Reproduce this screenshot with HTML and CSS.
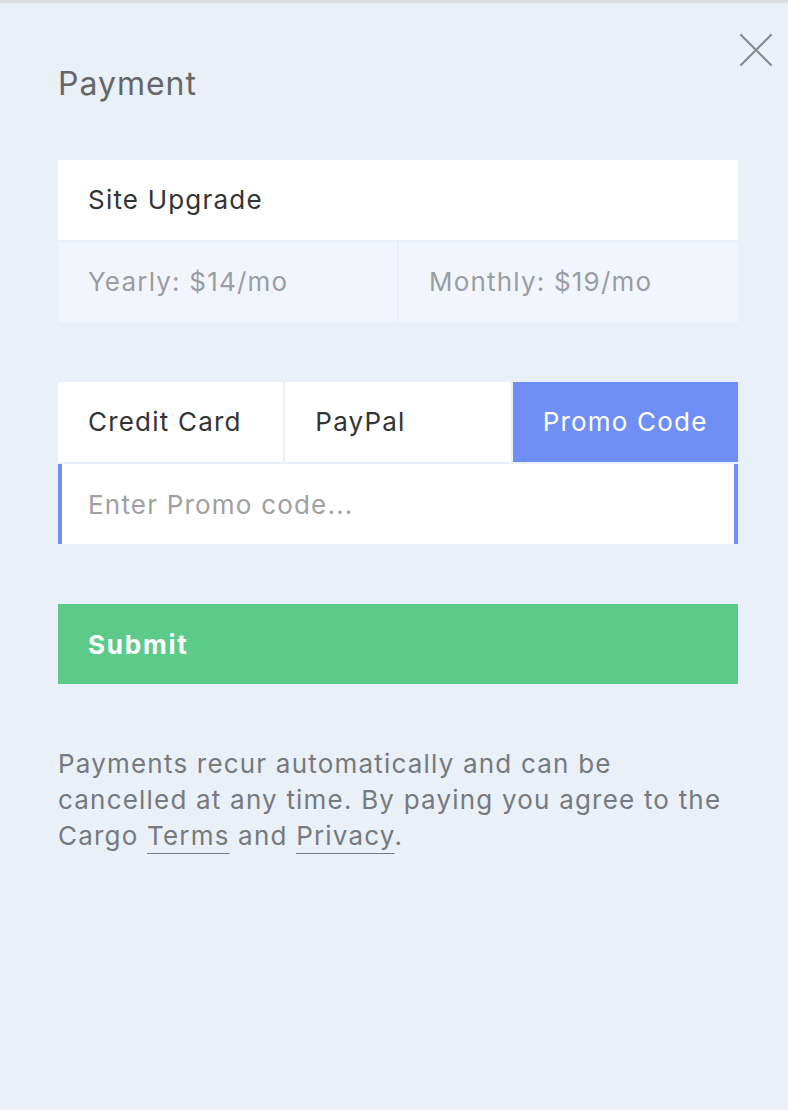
FILE: index.html
```html
<!DOCTYPE html>
<html lang="en">
<head>
    <meta charset="UTF-8">
    <meta name="viewport" content="width=device-width, initial-scale=1.0">
    <title>Payment</title>
    <link rel="stylesheet" href="styles.css">
</head>
<body>

    <!-- Payment panel -->
    <div class="panel">
        <button class="close" aria-label="Close">
            <svg width="34" height="34" viewBox="0 0 34 34">
                <path d="M2 2 L32 32 M32 2 L2 32" stroke="#8a8b8d" stroke-width="2.2" stroke-linecap="round" fill="none"/>
            </svg>
        </button>

        <h1 class="title">Payment</h1>

        <div class="plan">
            <div class="plan-name">Site Upgrade</div>
            <div class="price">Yearly: $14/mo</div>
            <div class="price">Monthly: $19/mo</div>
        </div>

        <div class="tabs">
            <div class="tab">Credit Card</div>
            <div class="tab">PayPal</div>
            <div class="tab active">Promo Code</div>
        </div>
        <input type="text" class="promo" placeholder="Enter Promo code...">

        <button class="submit">Submit</button>

        <p class="note">
            Payments recur automatically and can be cancelled at any time. By paying you agree to the
            Cargo <a href="#">Terms</a> and <a href="#">Privacy</a>.
        </p>
    </div>

</body>
</html>
```

FILE: styles.css
```css
body {
    margin: 0;
    font-family: Inter, "Noto Sans", sans-serif;
    letter-spacing: 1.2px;
    background-color: #e9f0f8;
    border-top: 3px solid #dcdde0;
    min-height: 1107px;
}

.panel {
    position: relative;
    padding: 0 50px 0 58px;
}

.close {
    position: absolute;
    top: 30px;
    right: 15px;
    padding: 0;
    border: none;
    background: none;
    cursor: pointer;
}

.close svg {
    display: block;
}

.title {
    margin: 0;
    padding-top: 58px;
    height: 46px;
    font-size: 32px;
    line-height: 46px;
    font-weight: 400;
    letter-spacing: 1px;
    color: #666;
}

/* Plan card */
.plan {
    display: grid;
    grid-template-columns: 1fr 1fr;
    gap: 2px;
    margin-top: 53px;
}

.plan-name {
    grid-column: 1 / 3;
    background-color: #fff;
    color: #333;
    font-size: 26px;
    height: 80px;
    line-height: 80px;
    padding-left: 30px;
}

.price {
    background-color: #f2f6fc;
    color: #9a9da2;
    font-size: 26px;
    height: 80px;
    line-height: 80px;
    padding-left: 30px;
}

/* Payment method tabs */
.tabs {
    display: grid;
    grid-template-columns: 1fr 1fr 1fr;
    gap: 2px;
    margin-top: 60px;
}

.tab {
    background-color: #fff;
    color: #333;
    font-size: 26px;
    height: 80px;
    line-height: 80px;
    padding-left: 30px;
    cursor: pointer;
}

.tab.active {
    background-color: #6f8ff6;
    color: #fff;
}

.promo {
    display: block;
    box-sizing: border-box;
    width: 100%;
    height: 80px;
    margin-top: 2px;
    padding: 0 0 0 26px;
    border: none;
    border-left: 4px solid #6f8ff6;
    border-right: 4px solid #6f8ff6;
    background-color: #fff;
    font-family: inherit;
    font-size: 26px;
    letter-spacing: 1.2px;
    color: #333;
    outline: none;
}

.promo::placeholder {
    color: #a0a0a0;
}

.submit {
    display: block;
    width: 100%;
    height: 80px;
    margin-top: 60px;
    padding: 0 0 0 30px;
    border: none;
    background-color: #5ccb8a;
    color: #fff;
    font-family: inherit;
    font-size: 26px;
    font-weight: 700;
    letter-spacing: 1.8px;
    text-align: left;
    cursor: pointer;
}

.note {
    margin: 62px 0 0;
    font-size: 26px;
    line-height: 36px;
    color: #76797e;
}

.note a {
    color: #76797e;
    text-decoration: underline;
    text-decoration-thickness: 1px;
    text-underline-offset: 8px;
}
```
